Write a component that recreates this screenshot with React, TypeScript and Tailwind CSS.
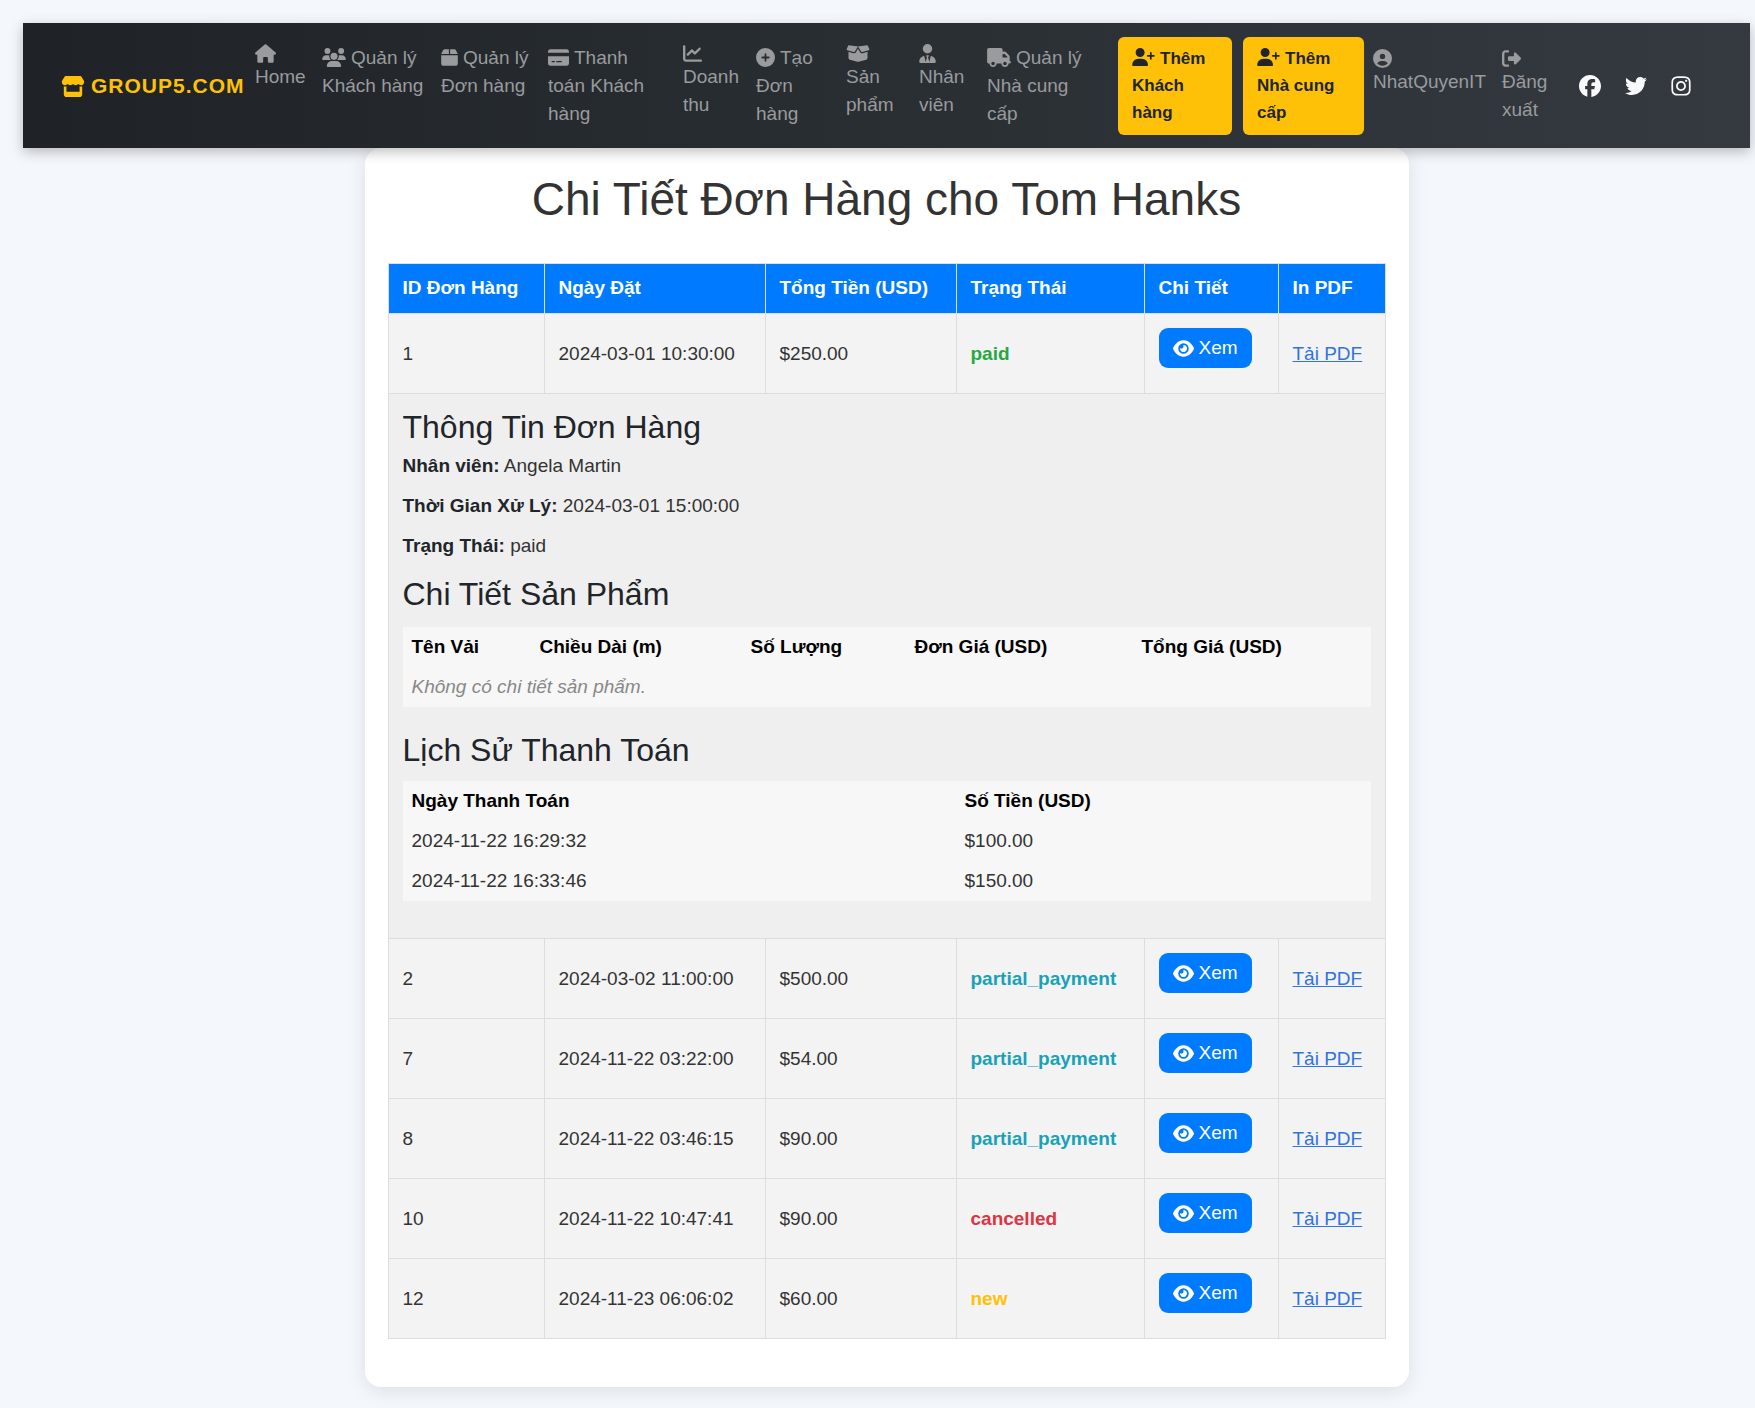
import type { ReactNode } from "react";
import type { IconType } from "react-icons";
import {
  FaBox,
  FaBoxOpen,
  FaChartLine,
  FaCirclePlus,
  FaCircleUser,
  FaCreditCard,
  FaEye,
  FaFacebook,
  FaHouse,
  FaInstagram,
  FaRightFromBracket,
  FaStore,
  FaTruck,
  FaTwitter,
  FaUserPlus,
  FaUserTie,
  FaUsers,
} from "react-icons/fa6";

type NavItem = {
  icon: IconType;
  iconWidth: string;
  lines: string[];
  box: string;
  stacked?: boolean;
};

const mainLinks: NavItem[] = [
  { icon: FaHouse, iconWidth: "w-[21px]", lines: ["Home"], box: "w-[67px]", stacked: true },
  { icon: FaUsers, iconWidth: "w-6", lines: ["Quản lý", "Khách hàng"], box: "w-[119px]" },
  { icon: FaBox, iconWidth: "w-[17px]", lines: ["Quản lý", "Đơn hàng"], box: "w-[107px]" },
  { icon: FaCreditCard, iconWidth: "w-[21px]", lines: ["Thanh", "toán Khách", "hàng"], box: "w-[135px]" },
  { icon: FaChartLine, iconWidth: "w-[19px]", lines: ["Doanh", "thu"], box: "w-[73px]", stacked: true },
  { icon: FaCirclePlus, iconWidth: "w-[19px]", lines: ["Tạo", "Đơn", "hàng"], box: "w-[90px]" },
  { icon: FaBoxOpen, iconWidth: "w-6", lines: ["Sản", "phẩm"], box: "w-[73px]", stacked: true },
  { icon: FaUserTie, iconWidth: "w-[17px]", lines: ["Nhân", "viên"], box: "w-[68px]", stacked: true },
  { icon: FaTruck, iconWidth: "w-6", lines: ["Quản lý", "Nhà cung", "cấp"], box: "w-[131px]" },
];

const userLinks: NavItem[] = [
  { icon: FaCircleUser, iconWidth: "w-[19px]", lines: ["NhatQuyenIT"], box: "w-[129px] pt-[3px]", stacked: true },
  { icon: FaRightFromBracket, iconWidth: "w-[19px]", lines: ["Đăng", "xuất"], box: "w-[77px] pt-[3px]", stacked: true },
];

function NavLink({ icon: Icon, iconWidth, lines, box, stacked }: NavItem) {
  return (
    <li className={box}>
      <a href="#" className="block py-[9px] text-[19px] leading-7 whitespace-nowrap text-[#999b9d]">
        {stacked && <Icon className={`block h-[19px] ${iconWidth}`} />}
        {lines.map((line, i) => (
          <span key={line} className="block">
            {i === 0 && !stacked && (
              <Icon className={`mr-[5px] inline h-[19px] align-[-3px] ${iconWidth}`} />
            )}
            {line}
          </span>
        ))}
      </a>
    </li>
  );
}

function AddButton({ lines, width }: { lines: string[]; width: string }) {
  return (
    <li className={width}>
      <a
        href="#"
        className="block rounded-md bg-[#ffc107] px-[14px] pt-2 pb-[9px] text-[17px] leading-[27px] font-bold whitespace-nowrap text-[#212529]"
      >
        {lines.map((line, i) => (
          <span key={line} className="block">
            {i === 0 && <FaUserPlus className="mr-[5px] inline h-[18px] w-[23px] align-[-2px]" />}
            {line}
          </span>
        ))}
      </a>
    </li>
  );
}

function Navbar() {
  return (
    <nav className="relative z-10 flex items-center bg-linear-to-r from-[#1f2327] to-[#343a40] pt-3 pr-[59px] pb-[11px] pl-[38px] shadow-[0_4px_12px_rgba(0,0,0,0.25)]">
      <a
        href="#"
        className="flex w-[194px] shrink-0 items-center gap-1.5 text-[21px] leading-8 font-bold tracking-[1px] whitespace-nowrap text-[#ffc107]"
      >
        <FaStore className="h-[21px] w-6" />
        GROUP5.COM
      </a>
      <ul className="flex grow items-start">
        {mainLinks.map((item, i) => (
          <NavLink key={i} {...item} />
        ))}
      </ul>
      <ul className="flex items-start">
        <AddButton lines={["Thêm", "Khách", "hàng"]} width="w-[114px]" />
        <li className="w-[11px]" aria-hidden="true" />
        <AddButton lines={["Thêm", "Nhà cung", "cấp"]} width="w-[121px]" />
        <li className="w-[9px]" aria-hidden="true" />
        {userLinks.map((item, i) => (
          <NavLink key={i} {...item} />
        ))}
      </ul>
      <div className="flex items-center gap-6 text-[#f8f9fa]">
        <a href="#" aria-label="Facebook">
          <FaFacebook className="size-[22px]" />
        </a>
        <a href="#" aria-label="Twitter">
          <FaTwitter className="size-[22px]" />
        </a>
        <a href="#" aria-label="Instagram">
          <FaInstagram className="h-[22px] w-5" />
        </a>
      </div>
    </nav>
  );
}

type Order = {
  id: number;
  date: string;
  total: string;
  status: string;
  color: string;
};

const orders: Order[] = [
  { id: 1, date: "2024-03-01 10:30:00", total: "$250.00", status: "paid", color: "text-[#28a745]" },
  { id: 2, date: "2024-03-02 11:00:00", total: "$500.00", status: "partial_payment", color: "text-[#17a2b8]" },
  { id: 7, date: "2024-11-22 03:22:00", total: "$54.00", status: "partial_payment", color: "text-[#17a2b8]" },
  { id: 8, date: "2024-11-22 03:46:15", total: "$90.00", status: "partial_payment", color: "text-[#17a2b8]" },
  { id: 10, date: "2024-11-22 10:47:41", total: "$90.00", status: "cancelled", color: "text-[#dc3545]" },
  { id: 12, date: "2024-11-23 06:06:02", total: "$60.00", status: "new", color: "text-[#ffc107]" },
];

const cell = "border border-[#dddddd] px-[14px]";

function OrderRow({ order }: { order: Order }) {
  return (
    <tr className="bg-[#f3f3f3]">
      <td className={cell}>{order.id}</td>
      <td className={cell}>{order.date}</td>
      <td className={cell}>{order.total}</td>
      <td className={`${cell} font-bold ${order.color}`}>{order.status}</td>
      <td className={`${cell} pt-[14px] pb-[25px]`}>
        <button
          type="button"
          className="flex h-10 items-center gap-[5px] rounded-[9px] bg-[#007bff] px-[14px] text-white"
        >
          <FaEye className="h-[19px] w-[21px]" />
          Xem
        </button>
      </td>
      <td className={cell}>
        <a href="#" className="text-[#3273dc] underline">
          Tải PDF
        </a>
      </td>
    </tr>
  );
}

function Heading({ children }: { children: ReactNode }) {
  return <h3 className="text-[32px] leading-[38px] text-[#212529]">{children}</h3>;
}

function Field({ label, value }: { label: string; value: string }) {
  return (
    <p className="mb-[18px]">
      <strong className="text-[#212529]">{label}</strong> {value}
    </p>
  );
}

const innerCell = "px-[9px] py-[9px] text-left";

function OrderDetails() {
  return (
    <tr className="bg-[#efefef]">
      <td colSpan={6} className={`${cell} pt-[14px] pb-[37px]`}>
        <Heading>Thông Tin Đơn Hàng</Heading>
        <div className="mt-[9px]">
          <Field label="Nhân viên:" value="Angela Martin" />
          <Field label="Thời Gian Xử Lý:" value="2024-03-01 15:00:00" />
          <Field label="Trạng Thái:" value="paid" />
        </div>
        <Heading>Chi Tiết Sản Phẩm</Heading>
        <table className="mt-[14px] mb-6 w-full table-fixed bg-[#f7f7f7]">
          <colgroup>
            <col className="w-[128px]" />
            <col className="w-[211px]" />
            <col className="w-[164px]" />
            <col className="w-[227px]" />
            <col />
          </colgroup>
          <thead className="text-black">
            <tr>
              <th className={innerCell}>Tên Vải</th>
              <th className={innerCell}>Chiều Dài (m)</th>
              <th className={innerCell}>Số Lượng</th>
              <th className={innerCell}>Đơn Giá (USD)</th>
              <th className={innerCell}>Tổng Giá (USD)</th>
            </tr>
          </thead>
          <tbody>
            <tr>
              <td colSpan={5} className={`${innerCell} text-[#888888] italic`}>
                Không có chi tiết sản phẩm.
              </td>
            </tr>
          </tbody>
        </table>
        <Heading>Lịch Sử Thanh Toán</Heading>
        <table className="mt-3 w-full table-fixed bg-[#f7f7f7]">
          <colgroup>
            <col className="w-[553px]" />
            <col />
          </colgroup>
          <thead className="text-black">
            <tr>
              <th className={innerCell}>Ngày Thanh Toán</th>
              <th className={innerCell}>Số Tiền (USD)</th>
            </tr>
          </thead>
          <tbody>
            <tr>
              <td className={innerCell}>2024-11-22 16:29:32</td>
              <td className={innerCell}>$100.00</td>
            </tr>
            <tr>
              <td className={innerCell}>2024-11-22 16:33:46</td>
              <td className={innerCell}>$150.00</td>
            </tr>
          </tbody>
        </table>
      </td>
    </tr>
  );
}

const columns = ["ID Đơn Hàng", "Ngày Đặt", "Tổng Tiền (USD)", "Trạng Thái", "Chi Tiết", "In PDF"];

export default function App() {
  return (
    <div className="min-h-screen bg-[#f4f7fc] pt-[23px] pr-[5px] pb-5 pl-[23px] font-['Liberation_Sans',Arial,sans-serif] text-[#333333]">
      <Navbar />
      <main className="mx-auto max-w-[1044px] rounded-2xl bg-white px-[23px] pt-6 pb-12 shadow-[0_4px_20px_rgba(0,0,0,0.1)]">
        <h1 className="text-center text-[46px] leading-[55px]">Chi Tiết Đơn Hàng cho Tom Hanks</h1>
        <table className="mt-9 w-full table-fixed border-collapse text-[19px] leading-[22px]">
          <colgroup>
            <col className="w-[156px]" />
            <col className="w-[221px]" />
            <col className="w-[191px]" />
            <col className="w-[188px]" />
            <col className="w-[134px]" />
            <col />
          </colgroup>
          <thead className="bg-[#007bff] text-white">
            <tr>
              {columns.map((name) => (
                <th key={name} className={`${cell} pt-[13px] pb-[14px] text-left`}>
                  {name}
                </th>
              ))}
            </tr>
          </thead>
          <tbody>
            <OrderRow order={orders[0]} />
            <OrderDetails />
            {orders.slice(1).map((order) => (
              <OrderRow key={order.id} order={order} />
            ))}
          </tbody>
        </table>
      </main>
    </div>
  );
}
